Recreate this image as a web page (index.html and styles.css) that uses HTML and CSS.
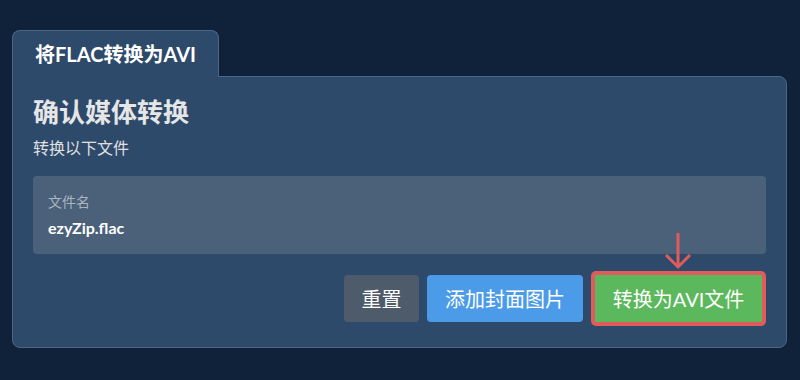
FILE: index.html
```html
<!DOCTYPE html>
<html lang="zh">
<head>
  <meta charset="UTF-8" />
  <meta name="viewport" content="width=device-width, initial-scale=1" />
  <title>将FLAC转换为AVI</title>
  <link rel="stylesheet" href="styles.css">
</head>
<body>

  <div class="panel">
    <div class="tabs">
      <div class="tab">将FLAC转换为AVI</div>
    </div>
    <div class="card">
      <h2 class="title">确认媒体转换</h2>
      <p class="subtitle">转换以下文件</p>

      <div class="file-box">
        <div class="file-label">文件名</div>
        <div class="file-name">ezyZip.flac</div>
      </div>

      <div class="actions">
        <button class="btn reset">重置</button>
        <button class="btn cover">添加封面图片</button>
        <div class="convert-wrap">
          <svg class="arrow" width="30" height="40" viewBox="0 0 30 40">
            <path d="M15 2 V36 M3 24 L15 36 L27 24" fill="none" stroke="#e05c5c" stroke-width="3" />
          </svg>
          <button class="btn convert">转换为AVI文件</button>
        </div>
      </div>
    </div>
  </div>

</body>
</html>
```

FILE: styles.css
```css
body {
  margin: 0;
  background: #10223a;
  font-family: Lato, "Noto Sans CJK SC", sans-serif;
  color: #e8e8e8;
}

.panel {
  padding: 30px 13px 0 12px;
}

.tabs {
  display: flex;
}

.tab {
  background: #2d4a6b;
  border: 1px solid #4b6787;
  border-bottom: none;
  border-radius: 8px 8px 0 0;
  padding: 0 22px;
  height: 46px;
  line-height: 46px;
  font-size: 20px;
  font-weight: 700;
  color: #ffffff;
  margin-bottom: -1px;
  position: relative;
  z-index: 1;
}

.card {
  background: #2d4a6b;
  border: 1px solid #4b6787;
  border-radius: 0 8px 8px 8px;
  padding: 20px 20px 0;
  height: 272px;
  box-sizing: border-box;
}

.title {
  margin: 0;
  font-size: 26px;
  line-height: 30px;
  font-weight: 700;
  color: #e6e6e6;
}

.subtitle {
  margin: 10px 0 0;
  font-size: 16px;
  line-height: 22px;
  color: #e0e0e0;
}

.file-box {
  margin-top: 17px;
  background: #4b6079;
  border-radius: 4px;
  height: 78px;
  padding: 16px 15px 0;
  box-sizing: border-box;
}

.file-label {
  font-size: 14px;
  line-height: 20px;
  color: #aab5c2;
}

.file-name {
  margin-top: 6px;
  font-size: 16px;
  line-height: 20px;
  font-weight: 700;
  color: #ffffff;
}

.actions {
  display: flex;
  justify-content: flex-end;
  align-items: center;
  gap: 8px;
  margin-top: 17px;
}

.btn {
  font-family: Lato, "Noto Sans CJK SC", sans-serif;
  font-size: 20px;
  height: 47px;
  border: none;
  border-radius: 4px;
  color: #ffffff;
  padding: 0;
  cursor: pointer;
}

.reset {
  background: #4d5b6a;
  width: 75px;
}

.cover {
  background: #4b9be8;
  width: 156px;
}

.convert-wrap {
  position: relative;
}

.arrow {
  position: absolute;
  left: 72px;
  top: -40px;
}

.convert {
  background: #5cb85c;
  border: 4px solid #e05c5c;
  border-radius: 5px;
  height: 55px;
  width: 175px;
  display: block;
}
```
